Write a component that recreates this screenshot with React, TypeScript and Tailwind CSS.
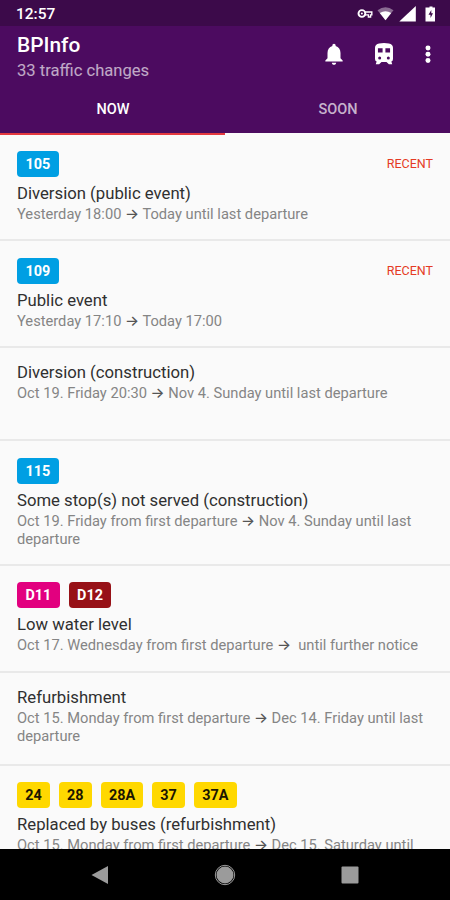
import React from 'react';

type Badge = { label: string; tone: string };
type Change = {
  badges: Badge[];
  title: string;
  from: string;
  until: string;
  recent?: boolean;
  height: string;
  pad: string;
};

const blue = 'bg-[#009fe3] text-white px-[8.600px]';
const pink = 'bg-[#e2007f] text-white px-[8.500px]';
const maroon = 'bg-[#971117] text-white px-[8.500px]';
const yellow = 'bg-[#ffd800] text-[#1c1600] px-[8.300px]';

const changes: Change[] = [
  { badges: [{ label: '105', tone: blue }], title: 'Diversion (public event)', from: 'Yesterday 18:00', until: 'Today until last departure', recent: true, height: 'h-[107px]', pad: 'pt-[17px]' },
  { badges: [{ label: '109', tone: blue }], title: 'Public event', from: 'Yesterday 17:10', until: 'Today 17:00', recent: true, height: 'h-[107px]', pad: 'pt-[17px]' },
  { badges: [], title: 'Diversion (construction)', from: 'Oct 19. Friday 20:30', until: 'Nov 4. Sunday until last departure', height: 'h-[93px]', pad: 'pt-[14px]' },
  { badges: [{ label: '115', tone: blue }], title: 'Some stop(s) not served (construction)', from: 'Oct 19. Friday from first departure', until: 'Nov 4. Sunday until last departure', height: 'h-[125px]', pad: 'pt-[17px]' },
  { badges: [{ label: 'D11', tone: pink }, { label: 'D12', tone: maroon }], title: 'Low water level', from: 'Oct 17. Wednesday from first departure', until: '\u00a0until further notice', height: 'h-[107px]', pad: 'pt-[16px]' },
  { badges: [], title: 'Refurbishment', from: 'Oct 15. Monday from first departure', until: 'Dec 14. Friday until last departure', height: 'h-[93px]', pad: 'pt-[14px]' },
  { badges: ['24', '28', '28A', '37', '37A'].map((label) => ({ label, tone: yellow })), title: 'Replaced by buses (refurbishment)', from: 'Oct 15. Monday from first departure', until: 'Dec 15. Saturday until last departure', height: 'h-[125px]', pad: 'pt-[16px]' },
];

function StatusBar() {
  return (
    <div className="flex h-[26px] shrink-0 items-center bg-[#3c0a4a] pl-4 pr-[15px] pt-[2px] text-white">
      <span className="flex-1 pt-[2px] text-[15.500px] font-medium leading-none">12:57</span>
      <svg width="78" height="16" viewBox="0 0 78 16" fill="currentColor">
        <g fill="none" stroke="currentColor" strokeWidth="1.9">
          <circle cx="4.900" cy="7.500" r="3.400" />
          <path d="M8 6h6.800v2.900h-1.200v2.100h-2.200V8.900H8" strokeWidth="1.400" />
        </g>
        <circle cx="4.900" cy="7.500" r="1" />
        <path d="M20.500 4.200Q28.500-1.500 36.500 4.200L28.500 14.200Z" opacity=".4" />
        <path d="M22.800 7.100Q28.500 3.500 34.200 7.100L28.500 14.200Z" />
        <path d="M58.800 0v15.500H42.300Z" />
        <path d="M71 1.500h2V0.500h3v1h2.500v14h-9.500v-14Z" transform="translate(-.5 0)" />
        <path d="M74.300 4l-2.800 4.800h2v3.200l2.500-4.800h-1.700Z" fill="#3c0a4a" />
      </svg>
    </div>
  );
}

function AppBar() {
  return (
    <div className="flex h-[60px] shrink-0 justify-between pl-[17px] text-white">
      <div className="pt-[7px]">
        <h1 className="text-[20.900px] font-medium leading-[24px]">BPInfo</h1>
        <p className="mt-[1px] text-[16.600px] leading-[25px] text-white/65">33 traffic changes</p>
      </div>
      <div className="flex pt-[15px]">
        <svg className="mr-[24px]" width="26" height="26" viewBox="0 0 24 24" fill="currentColor">
          <path d="M12 22c1.100 0 2-.9 2-2h-4c0 1.100.89 2 2 2zm6-6v-5c0-3.070-1.640-5.640-4.500-6.320V4c0-.83-.67-1.500-1.500-1.500s-1.500.67-1.500 1.500v.68C7.630 5.360 6 7.920 6 11v5l-2 2v1h16v-1l-2-2z" />
        </svg>
        <svg className="mr-[18px]" width="26" height="26" viewBox="0 0 24 24" fill="currentColor">
          <path fillRule="evenodd" d="M7.500 2.200Q12 1.500 16.500 2.200Q20.300 2.800 20.300 6.300V16.500Q20.300 18.300 18.800 19L19.600 21.500H16.500L14.300 19.300H9.700L7.500 21.500H4.400L5.200 19Q3.700 18.300 3.700 16.500V6.300Q3.700 2.800 7.500 2.200ZM6.400 6.800v3.700h4.300V6.800ZM13.300 6.800v3.700h4.300V6.800ZM8 14.200a1.400 1.400 0 1 0 0 2.800a1.400 1.400 0 1 0 0-2.800ZM16 14.200a1.400 1.400 0 1 0 0 2.800a1.400 1.400 0 1 0 0-2.800Z" />
        </svg>
        <svg className="mr-[9.500px]" width="26" height="26" viewBox="0 0 24 24" fill="currentColor">
          <circle cx="12" cy="6.500" r="2.300" />
          <circle cx="12" cy="12.300" r="2.300" />
          <circle cx="12" cy="18.100" r="2.300" />
        </svg>
      </div>
    </div>
  );
}

function Tabs() {
  return (
    <div className="grid h-[47px] shrink-0 grid-cols-2 text-center text-[14.500px] font-medium leading-[47px]">
      <div className="border-b-2 border-[#e5393f] pl-[1px] text-white">NOW</div>
      <div className="pl-[1px] text-white/70">SOON</div>
    </div>
  );
}

function Row({ change }: { change: Change }) {
  return (
    <li className={`${change.height} ${change.pad} shrink-0 border-b-2 border-[#e9e9e9] pl-[17px] pr-[17px]`}>
      {change.badges.length > 0 && (
        <div className="mb-[6px] flex h-[26px] items-center gap-[8.700px]">
          {change.badges.map((b) => (
            <span key={b.label} className={`${b.tone} h-[26px] rounded-[4px] text-[14.400px] font-bold leading-[27px]`}>
              {b.label}
            </span>
          ))}
          {change.recent && <span className="ml-auto text-[12.500px] text-[#e53a24]">RECENT</span>}
        </div>
      )}
      <h2 className="mb-[2px] text-[16.720px] leading-[20px] text-[#303030]">{change.title}</h2>
      <p className="pt-[1px] text-[14.680px] leading-[17.500px] text-[#858585]">
        {change.from} <span className="font-['Inter'] text-[14.700px] font-medium leading-none text-[#555555]">→</span> {change.until}
      </p>
    </li>
  );
}

function NavigationBar() {
  return (
    <div className="flex h-[51px] shrink-0 items-center justify-between bg-black pl-[91px] pr-[91px] text-[#9b9b9b]">
      <svg width="18" height="20" viewBox="0 0 18 20" fill="currentColor"><path d="M17 1v18L0.500 10Z" /></svg>
      <svg width="22" height="22" viewBox="0 0 22 22" fill="currentColor">
        <circle cx="11" cy="11" r="8.500" />
        <circle cx="11" cy="11" r="9.700" fill="none" stroke="currentColor" strokeWidth="1" />
      </svg>
      <svg width="18" height="18" viewBox="0 0 18 18" fill="currentColor"><rect x="0.500" y="0.500" width="17" height="17" rx="1" /></svg>
    </div>
  );
}

export default function App() {
  return (
    <div className="flex h-[900px] w-[450px] flex-col overflow-hidden bg-[#fafafa] font-['Roboto',sans-serif]">
      <header className="flex shrink-0 flex-col bg-[#4c0b60]">
        <StatusBar />
        <AppBar />
        <Tabs />
      </header>
      <ul className="flex min-h-0 flex-1 flex-col overflow-hidden pt-[1px]">
        {changes.map((c) => (
          <Row key={c.title} change={c} />
        ))}
      </ul>
      <NavigationBar />
    </div>
  );
}
